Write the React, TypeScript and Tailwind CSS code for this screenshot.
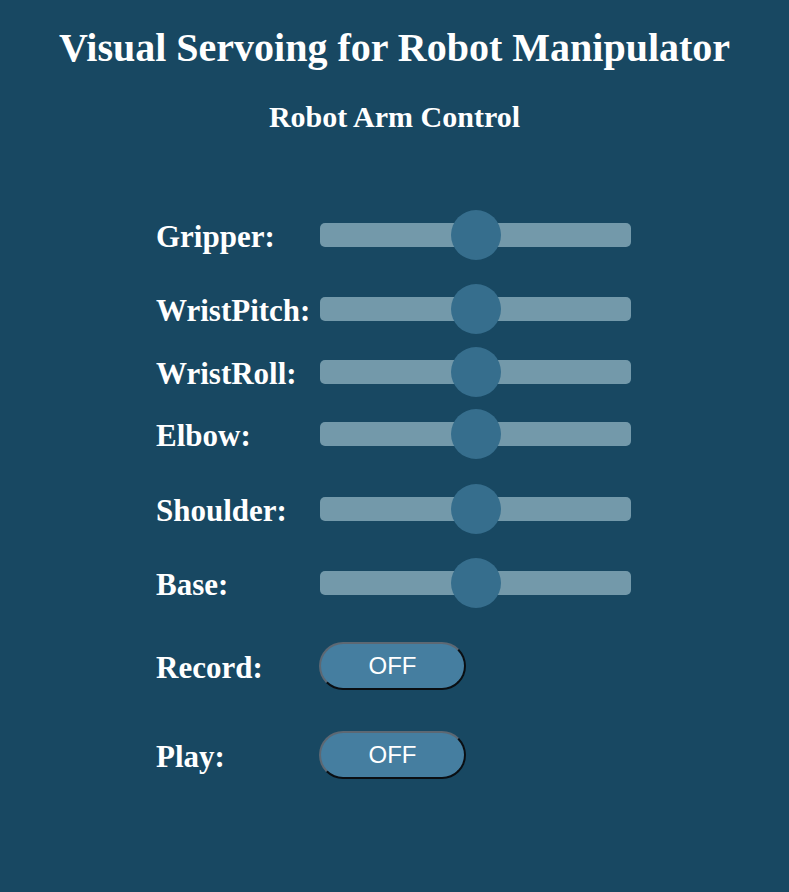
import { useState } from "react";

type Joint = {
  name: string;
  gap: string;
};

const joints: Joint[] = [
  { name: "Gripper", gap: "mt-0" },
  { name: "WristPitch", gap: "mt-[24px]" },
  { name: "WristRoll", gap: "mt-[13px]" },
  { name: "Elbow", gap: "mt-[12px]" },
  { name: "Shoulder", gap: "mt-[25px]" },
  { name: "Base", gap: "mt-[24px]" },
];

const Slider = ({ value }: { value: number }) => {
  return (
    <div className="relative w-[311px] h-[50px] flex items-center">
      <div className="w-full h-[24px] rounded-[5px] bg-[#7399aa]" />
      {/* thumb */}
      <div
        className="absolute top-0 w-[50px] h-[50px] rounded-full bg-[#366e8d]"
        style={{ left: `calc(${value}% - 25px)` }}
      />
    </div>
  );
};

const ToggleButton = ({ on, onClick }: { on: boolean; onClick: () => void }) => (
  <button
    onClick={onClick}
    className="w-[147px] h-[48px] rounded-full bg-[#457ea0] text-white text-[24px] border-2 border-t-[#5d6873] border-l-[#5d6873] border-b-[#0a0e12] border-r-[#0a0e12] font-['Liberation_Sans',Arial,sans-serif] leading-none"
  >
    {on ? "ON" : "OFF"}
  </button>
);

export default function App() {
  const [record, setRecord] = useState(false);
  const [play, setPlay] = useState(false);

  return (
    <div className="min-h-[892px] bg-[#184862] text-white font-['Liberation_Serif','Times_New_Roman',serif]">
      <h1 className="pt-[25px] text-center text-[40px] font-bold leading-[46px]">
        Visual Servoing for Robot Manipulator
      </h1>
      <h2 className="mt-[29px] text-center text-[30px] font-bold leading-[34px]">
        Robot Arm Control
      </h2>

      <div className="mx-auto mt-[76px] w-[477px]">
        {joints.map((j) => (
          <div key={j.name} className={`flex items-center h-[50px] ${j.gap}`}>
            <div className="w-[164px] text-[31px] font-bold leading-none pt-[3px]">
              {j.name}:
            </div>
            <Slider value={50} />
          </div>
        ))}

        <div className="flex items-center h-[50px] mt-[33px]">
          <div className="w-[163px] text-[31px] font-bold leading-none pt-[3px]">
            Record:
          </div>
          <ToggleButton on={record} onClick={() => setRecord(!record)} />
        </div>

        <div className="flex items-center h-[50px] mt-[39px]">
          <div className="w-[163px] text-[31px] font-bold leading-none pt-[3px]">
            Play:
          </div>
          <ToggleButton on={play} onClick={() => setPlay(!play)} />
        </div>
      </div>
    </div>
  );
}
